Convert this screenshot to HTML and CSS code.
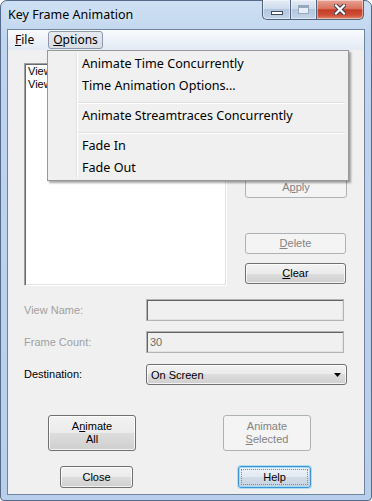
FILE: index.html
```html
<!DOCTYPE html>
<html lang="en">
<head>
    <meta charset="UTF-8">
    <title>Key Frame Animation</title>
    <link rel="stylesheet" href="styles.css">
</head>
<body>
    <div class="window">
        <div class="titlebar">
            <span class="title">Key Frame Animation</span>
            <div class="caption">
                <span class="cap min"><i></i></span>
                <span class="cap max"><i></i></span>
                <span class="cap close">
                    <svg width="12" height="11" viewBox="0 0 12 11">
                        <path d="M2 1.5 L10 9.5 M10 1.5 L2 9.5" stroke="#3b3b4a" stroke-width="4.2" stroke-linecap="square"/>
                        <path d="M2 1.5 L10 9.5 M10 1.5 L2 9.5" stroke="#fff" stroke-width="2.2" stroke-linecap="square"/>
                    </svg>
                </span>
            </div>
        </div>

        <div class="client">
            <div class="menubar">
                <span class="menu-item"><u>F</u>ile</span>
                <span class="menu-item open"><u>O</u>ptions</span>
            </div>

            <!-- open Options menu -->
            <div class="dropdown">
                <div class="dd-item">Animate Time Concurrently</div>
                <div class="dd-item">Time Animation Options...</div>
                <div class="dd-sep"></div>
                <div class="dd-item">Animate Streamtraces Concurrently</div>
                <div class="dd-sep"></div>
                <div class="dd-item">Fade In</div>
                <div class="dd-item">Fade Out</div>
            </div>

            <div class="dialog">
                <div class="top">
                    <div class="listbox">
                        <div>View 1</div>
                        <div>View 2</div>
                    </div>
                    <div class="side">
                        <button class="btn">A<u>d</u>d</button>
                        <button class="btn">Insert</button>
                        <button class="btn">Replace</button>
                        <button class="btn apply" disabled>A<u>p</u>ply</button>
                        <button class="btn delete" disabled><u>D</u>elete</button>
                        <button class="btn clear"><u>C</u>lear</button>
                    </div>
                </div>

                <div class="fields">
                    <label class="lbl off">View Name:</label>
                    <input class="edit" type="text" value="" disabled>
                    <label class="lbl off">Frame Count:</label>
                    <input class="edit" type="text" value="30" disabled>
                    <label class="lbl">Destination:</label>
                    <div class="combo">
                        <span>On Screen</span>
                        <svg width="7" height="4" viewBox="0 0 7 4"><path d="M0 0 H7 L3.5 4 Z" fill="#000"/></svg>
                    </div>
                </div>

                <div class="animate-row">
                    <button class="btn tall">A<u>n</u>imate<br>All</button>
                    <button class="btn tall" disabled>Animate<br><u>S</u>elected</button>
                </div>

                <div class="footer-row">
                    <button class="btn wide">Close</button>
                    <button class="btn wide default">Help</button>
                </div>
            </div>
        </div>
    </div>
</body>
</html>
```

FILE: styles.css
```css
* {
    box-sizing: border-box;
}

body {
    margin: 0;
    background: #fff;
    font-family: "Liberation Sans", Arial, sans-serif;
    font-size: 11px;
}

.window {
    width: 372px;
    height: 501px;
    display: flex;
    flex-direction: column;
    border: 1px solid #56698a;
    border-radius: 7px 7px 4px 4px;
    background: linear-gradient(#cddff3, #bfd5ee 40px, #b8cfe9);
    padding: 0 6px 5px;
}

.titlebar {
    height: 28px;
    display: flex;
    justify-content: space-between;
    align-items: flex-start;
}

.title {
    font-family: "Noto Sans", sans-serif;
    font-size: 12.5px;
    color: #000;
    padding: 5px 0 0 1px;
    text-shadow: 0 0 6px #e8f1fb;
}

.caption {
    display: flex;
    margin-top: -1px;
    margin-right: 1px;
}

.cap {
    height: 20px;
    border: 1px solid #52627a;
    border-top: none;
    display: flex;
    justify-content: center;
    background: linear-gradient(#e3ebf5, #cfdcec 45%, #b4c6dd 50%, #c3d4e9);
    box-shadow: inset 0 0 0 1px rgba(255, 255, 255, 0.45);
}

.cap.min {
    width: 28px;
    border-right: none;
    border-radius: 0 0 0 5px;
    align-items: flex-end;
    padding-bottom: 4px;
}

.cap.min i {
    width: 12px;
    height: 4px;
    background: #fff;
    border: 1px solid #3f4b5c;
}

.cap.max {
    width: 26px;
    border-right: none;
    align-items: center;
}

.cap.max i {
    width: 11px;
    height: 9px;
    border: 1px solid #98a8bc;
    background: #e8eef6;
    box-shadow: inset 0 2px 0 #98a8bc;
}

.cap.close {
    width: 48px;
    border-radius: 0 0 5px 0;
    align-items: center;
    background: linear-gradient(#e8a395, #d9735e 45%, #c43d27 52%, #cf4f36 80%, #e08a6e);
}

.client {
    flex: 1;
    position: relative;
    display: flex;
    flex-direction: column;
    background: #f0f0f0;
    border: 1px solid #6f84a1;
}

.menubar {
    height: 20px;
    display: flex;
    align-items: center;
    padding-left: 1px;
    background: linear-gradient(#f9fbfd, #e3eaf4);
    font-family: "Noto Sans", sans-serif;
    font-size: 12px;
}

.menu-item {
    height: 18px;
    line-height: 16px;
    padding: 0 5px;
    border: 1px solid transparent;
    border-radius: 3px;
}

.menu-item.open {
    margin-left: 8px;
    padding: 0 4px;
    border-color: #8b9aae;
    background: linear-gradient(#e6e9ee, #d9dee5);
}

.dropdown {
    position: absolute;
    left: 39px;
    top: 20px;
    width: 302px;
    height: 131px;
    padding: 2px;
    background: #f0f0f0;
    border: 1px solid #979797;
    box-shadow: 2px 2px 2px rgba(0, 0, 0, 0.35);
    font-family: "Noto Sans", sans-serif;
    font-size: 12.6px;
    z-index: 5;
}

.dropdown::before {
    content: "";
    position: absolute;
    left: 28px;
    top: 2px;
    bottom: 2px;
    width: 1px;
    background: #e2e3e3;
    border-right: 1px solid #fff;
    box-sizing: content-box;
}

.dd-item {
    height: 22px;
    line-height: 22px;
    padding-left: 32px;
    color: #000;
}

.dd-sep {
    margin: 5px 1px 1px 28px;
    border-top: 1px solid #e0e0e0;
    border-bottom: 1px solid #fff;
}

.dialog {
    flex: 1;
    padding: 13px 0 0 16px;
}

.top {
    display: flex;
    gap: 18px;
}

.listbox {
    width: 203px;
    height: 223px;
    padding: 1px 3px;
    background: #fff;
    border: 1px solid;
    border-color: #a0a0a0 #fff #fff #a0a0a0;
    box-shadow: inset 1px 1px 0 #696969, inset -1px -1px 0 #e3e3e3;
    line-height: 13px;
    overflow: hidden;
}

.side {
    width: 102px;
    display: flex;
    flex-direction: column;
    gap: 9px;
}

.btn {
    height: 21px;
    padding: 0;
    font-family: "Liberation Sans", Arial, sans-serif;
    font-size: 11px;
    line-height: 13px;
    color: #000;
    border: 1px solid #707070;
    border-radius: 3px;
    background: linear-gradient(#f2f2f2, #ebebeb 50%, #dddddd 50%, #cfcfcf);
    box-shadow: inset 0 0 0 1px rgba(255, 255, 255, 0.75);
}

.btn:disabled {
    color: #838383;
    border-color: #adb2b5;
    background: #f4f4f4;
    box-shadow: none;
}

.side .apply {
    margin-top: 24px;
}

.side .delete {
    margin-top: 26px;
    width: 101px;
}

.side .clear {
    width: 101px;
}

.fields {
    display: grid;
    grid-template-columns: 122px auto;
    row-gap: 10px;
    align-items: center;
    margin-top: 13px;
}

.lbl {
    color: #000;
}

.lbl.off {
    color: #a0a0a0;
}

.edit {
    width: 198px;
    height: 22px;
    padding: 0 3px;
    margin: 0;
    font-family: "Liberation Sans", Arial, sans-serif;
    font-size: 11px;
    color: #6d6d6d;
    background: #f0f0f0;
    border: 1px solid #b4b4b4;
    box-shadow: inset 1px 1px 0 #646464, inset -1px -1px 0 #e3e3e3;
}

.combo {
    width: 201px;
    height: 21px;
    margin-top: 1px;
    display: flex;
    align-items: center;
    justify-content: space-between;
    padding: 0 5px 0 4px;
    border: 1px solid #707070;
    border-radius: 3px;
    background: linear-gradient(#f2f2f2, #ebebeb 50%, #dddddd 50%, #cfcfcf);
    box-shadow: inset 0 0 0 1px rgba(255, 255, 255, 0.75);
}

.animate-row {
    display: flex;
    gap: 87px;
    margin: 30px 0 0 24px;
}

.btn.tall {
    width: 88px;
    height: 36px;
}

.footer-row {
    display: flex;
    gap: 105px;
    margin: 15px 0 0 36px;
}

.btn.wide {
    width: 73px;
    height: 22px;
}

.btn.default {
    border-color: #3d95d4;
    background: linear-gradient(#edf3f8, #e1e9f1 50%, #d1dce7 50%, #c6d3e0);
    box-shadow: 0 0 0 1px rgba(120, 205, 245, 0.55), inset 0 0 0 1px #9edcf6;
    outline: 1px dotted #9c7f7f;
    outline-offset: -4px;
}
```
